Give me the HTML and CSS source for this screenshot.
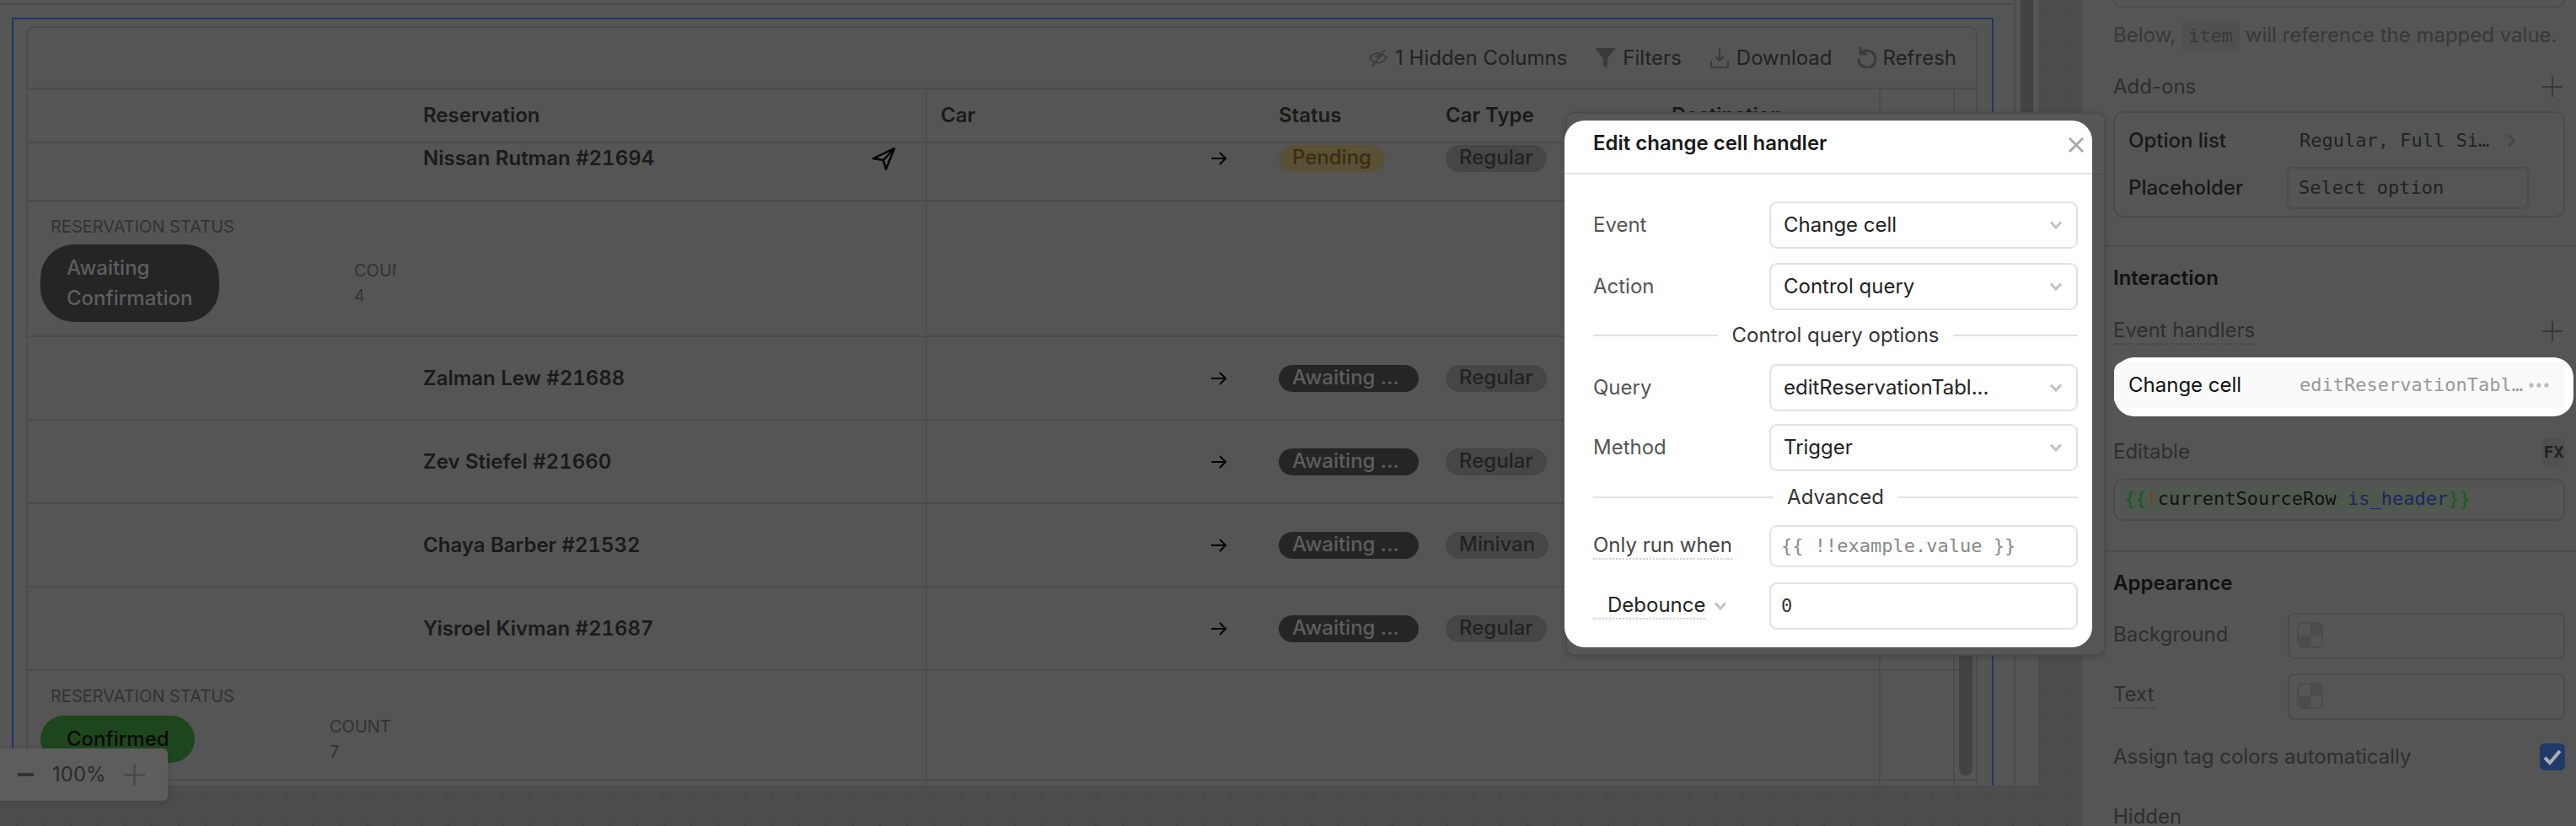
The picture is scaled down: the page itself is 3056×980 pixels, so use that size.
FILE: index.html
```html
<!DOCTYPE html>
<html>
<head>
  <title>Edit change cell handler</title>
  <link rel="stylesheet" href="styles.css">
</head>
<body>
<svg class="defs" width="0" height="0">
  <symbol id="chev" viewBox="0 0 16 12"><path d="M2 2.5 L8 9 L14 2.5" fill="none" stroke="currentColor" stroke-width="3"/></symbol>
  <symbol id="arrow" viewBox="0 0 20 16"><path d="M1 8 H18 M11 1 L18 8 L11 15" fill="none" stroke="currentColor" stroke-width="2"/></symbol>
  <symbol id="plus" viewBox="0 0 24 24"><path d="M12 0 V24 M0 12 H24" fill="none" stroke="currentColor" stroke-width="2"/></symbol>
</svg>

<div class="app">
  <div class="canvas">
    <div class="stage">
      <div class="stage-main">
        <div class="frame">
          <div class="table">
            <div class="toolbar">
              <div class="tool">
                <svg width="24" height="22" viewBox="0 0 24 22"><path d="M2 11 C6 4 14 3 22 10 C18 18 8 19 2 11 Z M9 11 a3.5 3.5 0 0 1 6 -2" fill="none" stroke="currentColor" stroke-width="1.6"/><path d="M20 1 L5 21" stroke="currentColor" stroke-width="1.6"/></svg>
                1 Hidden Columns
              </div>
              <div class="tool">
                <svg width="25" height="24" viewBox="0 0 25 24"><path d="M0 0 H25 L15 12 V24 L10 21 V12 Z" fill="currentColor"/></svg>
                Filters
              </div>
              <div class="tool">
                <svg width="24" height="24" viewBox="0 0 24 24"><path d="M12 0 V15 M7 10 L12 15 L17 10 M2 15 V21 Q2 23 4 23 H20 Q22 23 22 21 V15" fill="none" stroke="currentColor" stroke-width="2"/></svg>
                Download
              </div>
              <div class="tool tool-last">
                <svg width="23" height="25" viewBox="0 0 23 25"><path d="M5 7 A10 10 0 1 1 2 14" fill="none" stroke="currentColor" stroke-width="3"/><path d="M4 0 V8 H12" fill="none" stroke="currentColor" stroke-width="2.5"/></svg>
                Refresh
              </div>
            </div>

            <div class="row row-head">
              <div></div>
              <div class="cell-name">Reservation</div>
              <div class="cell-car">Car</div>
              <div>Status</div>
              <div>Car Type</div>
              <div>Destination</div>
              <div class="cell-x"></div>
              <div class="cell-x"></div>
            </div>

            <div class="rows">
              <div class="rows-inner">
                <div class="row row-data">
                  <div></div>
                  <div class="cell-name">Nissan Rutman #21694
                    <svg class="send" width="28" height="27" viewBox="0 0 28 27"><path d="M26 1 L1 13 L13 15 L16 26 Z M26 1 L13 15" fill="none" stroke="#000" stroke-width="2.4" stroke-linejoin="round"/></svg>
                  </div>
                  <div class="cell-car"><svg class="arrow" width="20" height="16"><use href="#arrow"/></svg></div>
                  <div><span class="tag tag-pending">Pending</span></div>
                  <div><span class="tag tag-grey">Regular</span></div>
                  <div></div>
                  <div class="cell-x"></div>
                  <div class="cell-x"></div>
                </div>

                <div class="row row-group">
                  <div class="group">
                    <div class="group-label">RESERVATION STATUS</div>
                    <div class="group-body">
                      <div class="pill pill-dark">Awaiting<br>Confirmation</div>
                      <div class="count">COUNT<br>4</div>
                    </div>
                  </div>
                  <div></div>
                  <div class="cell-car"></div>
                  <div></div>
                  <div></div>
                  <div></div>
                  <div class="cell-x"></div>
                  <div class="cell-x"></div>
                </div>

                <div class="row row-data">
                  <div></div>
                  <div class="cell-name">Zalman Lew #21688</div>
                  <div class="cell-car"><svg class="arrow" width="20" height="16"><use href="#arrow"/></svg></div>
                  <div><span class="tag tag-dark">Awaiting ...</span></div>
                  <div><span class="tag tag-grey">Regular</span></div>
                  <div></div>
                  <div class="cell-x"></div>
                  <div class="cell-x"></div>
                </div>

                <div class="row row-data">
                  <div></div>
                  <div class="cell-name">Zev Stiefel #21660</div>
                  <div class="cell-car"><svg class="arrow" width="20" height="16"><use href="#arrow"/></svg></div>
                  <div><span class="tag tag-dark">Awaiting ...</span></div>
                  <div><span class="tag tag-grey">Regular</span></div>
                  <div></div>
                  <div class="cell-x"></div>
                  <div class="cell-x"></div>
                </div>

                <div class="row row-data">
                  <div></div>
                  <div class="cell-name">Chaya Barber #21532</div>
                  <div class="cell-car"><svg class="arrow" width="20" height="16"><use href="#arrow"/></svg></div>
                  <div><span class="tag tag-dark">Awaiting ...</span></div>
                  <div><span class="tag tag-grey">Minivan</span></div>
                  <div></div>
                  <div class="cell-x"></div>
                  <div class="cell-x"></div>
                </div>

                <div class="row row-data">
                  <div></div>
                  <div class="cell-name">Yisroel Kivman #21687</div>
                  <div class="cell-car"><svg class="arrow" width="20" height="16"><use href="#arrow"/></svg></div>
                  <div><span class="tag tag-dark">Awaiting ...</span></div>
                  <div><span class="tag tag-grey">Regular</span></div>
                  <div></div>
                  <div class="cell-x"></div>
                  <div class="cell-x"></div>
                </div>

                <div class="row row-group row-group-short">
                  <div class="group">
                    <div class="group-label">RESERVATION STATUS</div>
                    <div class="group-body">
                      <div class="pill pill-green">Confirmed</div>
                      <div class="count">COUNT<br>7</div>
                    </div>
                  </div>
                  <div></div>
                  <div class="cell-car"></div>
                  <div></div>
                  <div></div>
                  <div></div>
                  <div class="cell-x"></div>
                  <div class="cell-x"></div>
                </div>

                <div class="row row-end">
                  <div></div>
                  <div></div>
                  <div class="cell-car"></div>
                  <div></div>
                  <div></div>
                  <div></div>
                  <div class="cell-x"></div>
                  <div class="cell-x"></div>
                </div>
              </div>
              <div class="thumb"></div>
            </div>
          </div>
        </div>
      </div>
      <div class="gutter"><div class="gutter-thumb"></div></div>
    </div>

    <div class="zoom-box">
      <svg width="19" height="4"><rect width="19" height="4" fill="#333"/></svg>
      <span>100%</span>
      <svg class="zoom-plus" width="25" height="25"><use href="#plus"/></svg>
    </div>
  </div>

  <div class="panel">
    <div class="top-box"></div>
    <div class="hint-line">Below, <code class="chip">item</code> will reference the mapped value.</div>

    <div class="sec-head head-addons"><span>Add-ons</span><svg class="panel-plus" width="24" height="24"><use href="#plus"/></svg></div>
    <div class="addons">
      <div class="addon-label">Option list</div>
      <div class="addon-value">Regular, Full Si… <svg class="chev-right" width="10" height="18" viewBox="0 0 10 18"><path d="M2 2 L8 9 L2 16" fill="none" stroke="currentColor" stroke-width="2.5"/></svg></div>
      <div class="addon-label">Placeholder</div>
      <div class="addon-input">Select option</div>
    </div>

    <div class="divider div-first"></div>
    <div class="title title-interaction">Interaction</div>
    <div class="sec-head head-events"><span class="dotted">Event handlers</span><svg class="panel-plus" width="24" height="24"><use href="#plus"/></svg></div>

    <div class="focus">
      <div class="focus-inner">
        <span class="focus-name">Change cell</span>
        <span class="focus-query">editReservationTabl…</span>
        <svg width="24" height="6" viewBox="0 0 24 6"><circle cx="3" cy="3" r="2.6" fill="#bbb"/><circle cx="12" cy="3" r="2.6" fill="#bbb"/><circle cx="21" cy="3" r="2.6" fill="#bbb"/></svg>
      </div>
    </div>

    <div class="sec-head head-editable"><span>Editable</span><span class="fx">FX</span></div>
    <div class="code-box">
      <span class="code"><span class="c-green">{{</span><span class="c-red">!</span>currentSourceRow<span class="c-gold">.</span><span class="c-blue">is_header</span><span class="c-green">}}</span></span>
    </div>

    <div class="divider div-second"></div>
    <div class="title title-appearance">Appearance</div>

    <div class="color-row color-bg"><span class="color-label">Background</span><div class="color-input"><div class="swatch"></div></div></div>
    <div class="color-row color-text"><span class="dotted color-label">Text</span><div class="color-input"><div class="swatch"></div></div></div>

    <div class="sec-head head-assign"><span>Assign tag colors automatically</span>
      <div class="check"><svg width="24" height="20" viewBox="0 0 24 20"><path d="M3 11 L9 17 L21 3" fill="none" stroke="#a9afb9" stroke-width="4"/></svg></div>
    </div>
    <div class="sec-head head-hidden"><span>Hidden</span></div>
  </div>
</div>

<!-- modal, over everything -->
<div class="modal-ghost"><div class="ghost-line"></div></div>
<div class="modal">
  <div class="modal-head">
    <div class="modal-title">Edit change cell handler</div>
    <svg class="modal-close" width="20" height="20" viewBox="0 0 20 20"><path d="M2 2 L18 18 M18 2 L2 18" stroke="#aaa" stroke-width="3"/></svg>
  </div>
  <div class="modal-body">
    <div class="field">
      <label>Event</label>
      <div class="select">Change cell <svg class="chev" width="16" height="12"><use href="#chev"/></svg></div>
    </div>
    <div class="field field-next">
      <label>Action</label>
      <div class="select">Control query <svg class="chev" width="16" height="12"><use href="#chev"/></svg></div>
    </div>
    <div class="sep sep-options"><span>Control query options</span></div>
    <div class="field">
      <label>Query</label>
      <div class="select">editReservationTabl... <svg class="chev" width="16" height="12"><use href="#chev"/></svg></div>
    </div>
    <div class="field field-method">
      <label>Method</label>
      <div class="select">Trigger <svg class="chev" width="16" height="12"><use href="#chev"/></svg></div>
    </div>
    <div class="sep sep-advanced"><span>Advanced</span></div>
    <div class="field field-short">
      <label class="label-under">Only run when</label>
      <div class="select mono placeholder">{{ !!example.value }}</div>
    </div>
    <div class="field field-last">
      <div class="debounce"><span class="label-under debounce-text">Debounce</span><svg class="debounce-chev" width="16" height="12"><use href="#chev"/></svg></div>
      <div class="select mono">0</div>
    </div>
  </div>
</div>
</body>
</html>
```

FILE: styles.css
```css
* {
  box-sizing: border-box;
}

html, body {
  margin: 0;
  height: 980px;
  overflow: hidden;
  background: #555;
}

body {
  font-family: Inter, "Liberation Sans", sans-serif;
  font-size: 24px;
  line-height: 36px;
  color: #2e2e2e;
  position: relative;
}

.defs {
  position: absolute;
}

.app {
  display: flex;
  width: 3056px;
  height: 980px;
}

/* canvas */
.canvas {
  flex: 0 0 2470px;
  height: 980px;
  position: relative;
  overflow: hidden;
  background-color: #4c4c4c;
  background-image: radial-gradient(circle, #464646 1.5px, transparent 2px);
  background-size: 32px 32px;
  background-position: 4px 2px;
}

.stage {
  display: flex;
  width: 2420px;
  height: 933px;
  background: #555;
  border-right: 2px solid #4c4c4c;
  border-bottom: 1px solid #4a4a4a;
}

.stage-main {
  flex: 0 0 2391px;
  border-right: 2px solid #4b4b4b;
  padding-top: 21px;
  background: linear-gradient(#4b4b4b, #4b4b4b) no-repeat 0 4px / 100% 2px;
}

.gutter {
  flex: 1;
  padding-left: 6px;
}

.gutter-thumb {
  width: 15px;
  height: 300px;
  background: #434343;
}

.frame {
  width: 2351px;
  height: 911px;
  margin-left: 14px;
  padding: 8px 17px 0;
  border: 2px solid #1e3963;
  border-bottom: 0;
}

.table {
  width: 2315px;
  height: 901px;
  margin-left: -2px;
  border: 2px solid #4b4b4b;
  border-bottom: 0;
  border-radius: 10px 10px 0 0;
  display: flex;
  flex-direction: column;
}

.toolbar {
  height: 73px;
  flex: none;
  display: flex;
  justify-content: flex-end;
  align-items: center;
  gap: 33px;
  padding-right: 23px;
  border-bottom: 2px solid #4b4b4b;
  color: #222;
}

.tool {
  display: flex;
  align-items: center;
  gap: 8px;
}

.tool-last {
  margin-left: -4px;
}

.tool svg {
  color: #3a3a3a;
}

.row {
  display: grid;
  grid-template-columns: 469px 596px 419px 198px 268px 246px 88px 27px;
  border-bottom: 2px solid #4b4b4b;
}

.row > div {
  display: flex;
  align-items: center;
}

.row-head {
  height: 64px;
  flex: none;
  font-weight: 600;
  color: #1a1a1a;
}

.row-data {
  height: 99px;
}

.row-data:first-child {
  height: 100px;
}

.row-group {
  height: 161px;
}

.row-group-short {
  height: 130px;
}

.row-end {
  height: 8px;
  border-bottom: 0;
}

.rows {
  flex: 1;
  position: relative;
  overflow: hidden;
}

.rows-inner {
  margin-top: -31px;
}

.cell-name {
  position: relative;
  font-weight: 600;
  font-variant-numeric: tabular-nums;
  color: #1a1a1a;
}

.cell-car {
  border-left: 2px solid #4b4b4b;
  padding-left: 16px;
}

.cell-x {
  border-left: 2px solid #4b4b4b;
}

.send {
  position: absolute;
  left: 533px;
  top: 36px;
}

.arrow {
  margin-left: 320px;
  color: #000;
}

.tag {
  display: inline-block;
  height: 32px;
  line-height: 30px;
  padding: 0 16px;
  border-radius: 16px;
  font-weight: 500;
  white-space: nowrap;
}

.tag-pending {
  background: #595036;
  color: #3a2e10;
}

.tag-grey {
  background: #464646;
  color: #222;
}

.tag-dark {
  background: #252525;
  color: #5e5e5e;
  min-width: 166px;
}

.row-group > .group {
  display: block;
  width: 437px;
  overflow: hidden;
  padding: 15px 0 0 27px;
}

.group-label {
  font-size: 20px;
  line-height: 30px;
  color: #333;
}

.group-body {
  display: flex;
  align-items: center;
  gap: 160px;
  margin-top: 6px;
  margin-left: -12px;
}

.pill {
  flex: none;
  padding: 10px 31px;
  font-weight: 500;
}

.pill-dark {
  background: #252525;
  color: #5e5e5e;
  border-radius: 40px;
  width: 212px;
}

.pill-green {
  background: #1e461c;
  color: #0a0a0a;
  border-radius: 28px;
  width: 183px;
}

.count {
  flex: none;
  font-size: 20px;
  line-height: 30px;
  color: #333;
}

.thumb {
  position: absolute;
  left: 2291px;
  top: 600px;
  width: 16px;
  height: 150px;
  background: #434343;
  border-radius: 0 0 8px 8px;
}

.zoom-box {
  position: absolute;
  left: 0;
  top: 888px;
  width: 199px;
  height: 62px;
  display: flex;
  align-items: center;
  padding-left: 21px;
  background: #5d5d5d;
  border-radius: 0 6px 6px 0;
  box-shadow: 0 2px 8px rgba(0, 0, 0, 0.12);
  color: #2b2b2b;
}

.zoom-box span {
  margin-left: 22px;
}

.zoom-plus {
  margin-left: 21px;
  color: #464646;
}

/* right panel */
.panel {
  flex: 0 0 586px;
  width: 586px;
  padding: 0 13px 0 37px;
  background: #555;
}

.top-box {
  height: 49px;
  margin-top: -40px;
  border: 2px solid #4b4b4b;
  border-radius: 10px;
}

.hint-line {
  margin-top: 15px;
  color: #383838;
  white-space: nowrap;
}

.chip {
  display: inline-block;
  height: 36px;
  padding: 0 8px;
  border-radius: 6px;
  background: #505050;
  font-family: "DejaVu Sans Mono", monospace;
  font-size: 22px;
  color: #383838;
}

.sec-head {
  display: flex;
  justify-content: space-between;
  align-items: center;
  height: 36px;
}

.head-addons {
  margin-top: 24px;
}

.panel-plus {
  margin-right: 3px;
  color: #383838;
}

.addons {
  display: grid;
  grid-template-columns: 188px 287px;
  align-items: center;
  align-content: start;
  row-gap: 13px;
  height: 126px;
  margin-top: 11px;
  padding: 15px 0 0 16px;
  border: 2px solid #4b4b4b;
  border-radius: 12px;
}

.addon-label {
  color: #181818;
  font-weight: 500;
}

.addon-value {
  display: flex;
  align-items: center;
  padding-left: 15px;
  font-family: "DejaVu Sans Mono", monospace;
  font-size: 22px;
  color: #222;
  white-space: pre;
}

.chev-right {
  margin-left: 8px;
  color: #444;
}

.addon-input {
  height: 50px;
  line-height: 46px;
  padding-left: 12px;
  border: 2px solid #4b4b4b;
  border-radius: 8px;
  font-family: "DejaVu Sans Mono", monospace;
  font-size: 22px;
  color: #222;
}

.divider {
  height: 2px;
  margin-left: -37px;
  margin-right: -13px;
  background: #4d4d4d;
}

.div-first {
  margin-top: 33px;
}

.div-second {
  margin-top: 35px;
}

.title {
  font-weight: 600;
  color: #111;
  height: 36px;
}

.title-interaction {
  margin-top: 19px;
}

.title-appearance {
  margin-top: 19px;
}

.head-events {
  margin-top: 27px;
}

.dotted {
  line-height: 30px;
  border-bottom: 2px dotted #454545;
}

.focus {
  height: 70px;
  width: 545px;
  margin-top: 13px;
  margin-left: 1px;
  padding: 5px 11px 10px 0;
  background: #fff;
  border-radius: 24px;
}

.focus-inner {
  display: flex;
  align-items: center;
  height: 55px;
  padding-left: 17px;
  background: #fafafa;
  border-radius: 12px 0 0 12px;
}

.focus-name {
  flex: 0 0 203px;
  color: #111;
}

.focus-query {
  flex: 0 0 272px;
  font-family: "DejaVu Sans Mono", monospace;
  font-size: 22px;
  color: #999;
  white-space: nowrap;
  overflow: hidden;
}

.head-editable {
  margin-top: 24px;
}

.fx {
  width: 27px;
  height: 32px;
  line-height: 32px;
  background: #505050;
  border-radius: 4px;
  font-family: "DejaVu Sans Mono", monospace;
  font-size: 20px;
  font-weight: 600;
  color: #222;
  text-align: center;
  white-space: nowrap;
}

.code-box {
  height: 50px;
  margin-top: 14px;
  padding: 8px 0 0 11px;
  border: 2px solid #4b4b4b;
  border-radius: 10px;
}

.code {
  display: inline-block;
  height: 28px;
  line-height: 27px;
  background: #4d594d;
  border-radius: 6px;
  font-family: "DejaVu Sans Mono", monospace;
  font-size: 22px;
  color: #111;
  vertical-align: top;
}

.c-green { color: #1c5527; }
.c-red { color: #8a3a12; }
.c-gold { color: #7a5a20; }
.c-blue { color: #20245f; }

.color-row {
  display: flex;
  align-items: center;
  justify-content: space-between;
}

.color-bg {
  margin-top: 17px;
}

.color-text {
  margin-top: 17px;
}

.color-label {
  margin-top: -3px;
}

.color-input {
  width: 329px;
  height: 55px;
  padding: 9px 0 0 9px;
  border: 2px solid #4b4b4b;
  border-radius: 8px;
}

.swatch {
  width: 31px;
  height: 31px;
  border: 2px solid #4b4b4b;
  border-radius: 8px;
  background: repeating-conic-gradient(#4c4c4c 0 25%, #555 0 50%) 0 0 / 28px 28px;
}

.head-assign {
  margin-top: 26px;
}

.check {
  display: flex;
  align-items: center;
  justify-content: center;
  width: 30px;
  height: 32px;
  border-radius: 6px;
  background: #1f3a66;
}

.head-hidden {
  margin-top: 35px;
}

/* modal */
.modal-ghost {
  position: absolute;
  left: 1857px;
  top: 133px;
  width: 641px;
  height: 645px;
  background: #565656;
  border: 2px solid #4b4b4b;
  border-radius: 10px;
  box-shadow: 0 2px 8px rgba(0, 0, 0, 0.15);
}

.ghost-line {
  margin: 71px 0 0 auto;
  width: 16px;
  height: 2px;
  background: #4d4d4d;
}

.modal {
  position: absolute;
  left: 1856px;
  top: 143px;
  width: 626px;
  height: 625px;
  background: #fff;
  border-radius: 24px;
  overflow: hidden;
}

.modal-head {
  position: relative;
  height: 64px;
  padding: 9px 0 0 34px;
  border-bottom: 2px solid #e2e2e2;
}

.modal-title {
  font-weight: 600;
  color: #1a1a1a;
}

.modal-close {
  position: absolute;
  left: 597px;
  top: 19px;
}

.modal-body {
  padding: 32px 17px 0 34px;
}

.field {
  display: grid;
  grid-template-columns: 209px 366px;
  align-items: center;
  height: 56px;
  color: #555;
}

.field-next {
  margin-top: 17px;
}

.field-method {
  margin-top: 15px;
}

.field-short {
  height: 50px;
}

.field-last {
  margin-top: 18px;
}

.select {
  display: flex;
  align-items: center;
  justify-content: space-between;
  height: 100%;
  padding: 0 16px 0 15px;
  border: 2px solid #e2e2e2;
  border-radius: 9px;
  color: #222;
}

.mono {
  padding-left: 12px;
  font-family: "DejaVu Sans Mono", monospace;
  font-size: 22px;
  color: #333;
}

.placeholder {
  color: #888;
}

.chev {
  color: #c2c2c2;
}

.sep {
  display: flex;
  align-items: center;
  gap: 16px;
  height: 30px;
  line-height: 30px;
  color: #333;
}

.sep::before, .sep::after {
  content: "";
  flex: 1;
  height: 2px;
  background: #e2e2e2;
}

.sep-options {
  margin-top: 15px;
  margin-bottom: 19px;
}

.sep-advanced {
  margin-top: 16px;
  margin-bottom: 18px;
}

.label-under {
  display: inline-block;
  justify-self: start;
  line-height: 30px;
  border-bottom: 2px dotted #d0d0d0;
  color: #444;
}

.debounce {
  display: flex;
  align-items: center;
}

.debounce-text {
  padding-left: 17px;
  color: #222;
}

.debounce-chev {
  margin-left: 10px;
  color: #c2c2c2;
}
```
